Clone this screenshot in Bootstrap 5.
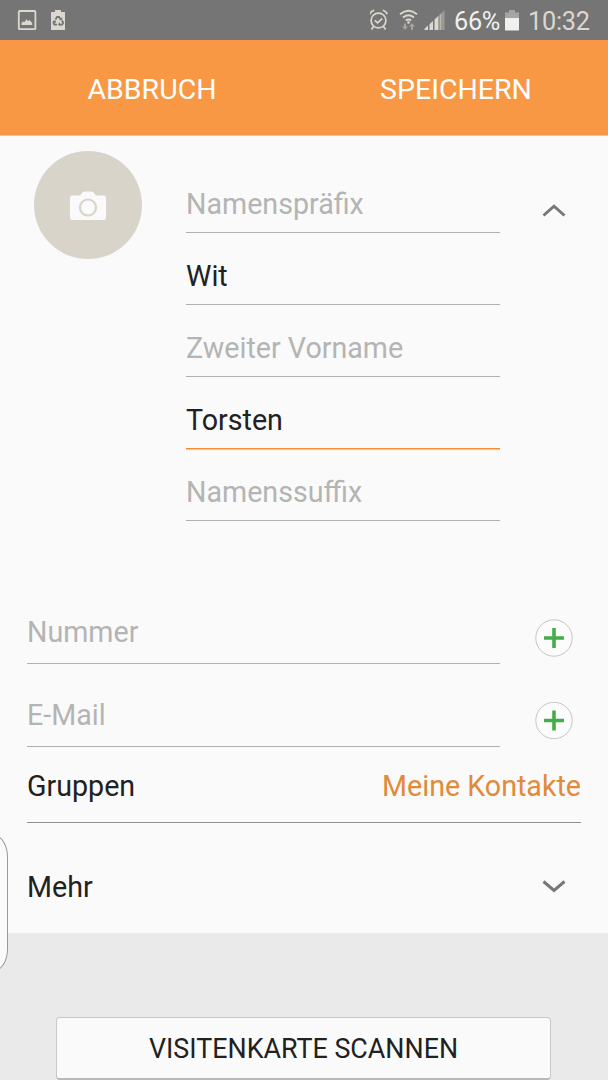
<!DOCTYPE html>
<html lang="de">
<head>
<meta charset="utf-8">
<meta name="viewport" content="width=device-width, initial-scale=1">
<title>Kontakt bearbeiten</title>
<link href="https://cdn.jsdelivr.net/npm/bootstrap@5.3.0/dist/css/bootstrap.min.css" rel="stylesheet">
<style>
body{font-family:Roboto,"Liberation Sans",sans-serif;font-size:28.65px;line-height:40px;color:#212121;background:#eaeaea;height:1080px;overflow:hidden}
.status{height:40px;background:#757575;color:#ddd8cf;font-size:25.3px;letter-spacing:-.3px}
.status span{padding-top:3px}
.percent{color:#f0f0f0}
.status svg,.sheet svg{display:block;flex:none}
.actions{height:96px;background:#f89844;color:#fff;border-bottom:1px solid #d5cdc5}
.actions button{color:inherit;font-size:28.5px;line-height:40px;padding:5px 0 0;border:0;border-radius:0}
.sheet{height:797px;background:#fafafa}
.avatar{width:108px;height:108px;background:#d9d4c9;margin:15px 0 0 34px;padding-top:1px}
.names{width:314px;margin:25px 0 0 44px}
.field{height:72px;padding:23px 0 8px;border-bottom:1px solid #b0b0b0}
.empty{color:#b4b4b4}
.focused{border-color:#f88c28;box-shadow:0 1px #fbc592}
.entry{height:83px;margin-left:27px}
.entry .line{width:473px;height:83px;border-bottom:1px solid #b0b0b0;padding-top:31px}
.add{width:38px;height:38px;margin:38px 0 0 35px}
.groups{height:76px;margin:0 27px;border-bottom:1px solid #909090;padding-top:19px}
.groups span:last-child{color:#e28a3a}
.more{height:110px;padding:44px 42px 0 27px}
.edge{left:-20px;top:835px;width:28px;height:136px;background:#fafafa;border:1px solid #999;border-radius:14px/22px}
.scan{width:495px;height:63px;margin:84px 0 0 56px;background:#fafafa;border:1px solid #c8c8c8;border-bottom:2px solid #b9b9b9;border-radius:4px;font-size:26.85px;line-height:60px;padding:1px 0 0;color:#212121}
</style>
</head>
<body class="position-relative">
<header>
  <div class="status d-flex align-items-center">
    <svg width="370" height="40" viewBox="0 0 370 40">
      <rect x="18.800" y="11" width="16.600" height="18.200" rx="1" fill="none" stroke="#ddd8cf" stroke-width="1.800"/>
      <path d="M21.500 25v-2l1.500-1.500 1.500.5 2-2.800 1.600 2 1.500-1.200 2.600 3V25z" fill="#ddd8cf"/>
      <path d="M51 12h4v-2h6v2h4v18H51z" fill="#ddd8cf"/>
      <g fill="none" stroke="#757575" stroke-width="1.800"><path d="M55.400 19.400l1.700-2.400h2l1.700 2.400M62 20.500l1.200 2.300-1 1.800h-2.800M57 24.600h-2.600l-1-1.800 1-2.200"/></g>
      <path d="M59.200 20.300h3v-3zM60 22.300v4l-2.200-2zM52.700 21.200l3-.8.5 2.800z" fill="#757575"/>
    </svg>
    <svg width="84" height="40" viewBox="370 0 84 40">
      <g fill="none" stroke="#ddd8cf" stroke-width="1.700"><circle cx="378.500" cy="20.500" r="7.400"/><path d="M374.800 20.300l2.800 2.600 4.600-4.200M369.800 14.300q1-3 4.400-4M387.200 14.300q-1-3-4.400-4M373.700 26.300l-2.300 3.200M383.300 26.300l2.300 3.200"/></g>
      <g fill="none" stroke="#ddd8cf" stroke-width="1.900"><path d="M400 14.200q8.500-6.800 17 0M403 17.500q5.500-4.500 11 0M405.800 20.500q2.700-2.200 5.400 0"/></g>
      <circle cx="408.500" cy="22.500" r="1.300" fill="#ddd8cf"/>
      <path d="M404 23.500h2v3h2l-3 3.500-3-3.500h2zM411 30h2v-3.500h2l-3-3.500-3 3.500h2z" fill="#a8a5a0"/>
      <path d="M424.500 30v-1.300l3.500-3.200V30zM429.500 30v-5.800l3.500-3.300V30zM434.500 30V19.500l4-3.700V30z" fill="#ddd8cf"/>
      <path d="M439.500 30V14.800l1.500-1.300V30z" fill="#bdb9b2"/><path d="M441 13.500l3.600-3.500v20H441z" fill="#9b9994"/>
    </svg>
    <span class="percent">66%</span>
    <svg width="28" height="40" viewBox="500 0 28 40"><path d="M505 12.500h4V10h6v2.500h4V18h-14z" fill="#a5a5a5"/><path d="M505 18h14v12.500h-14z" fill="#f0f0f0"/></svg>
    <span>10:32</span>
  </div>
  <nav class="actions d-flex">
    <button class="btn w-50 text-center">ABBRUCH</button>
    <button class="btn w-50 text-center">SPEICHERN</button>
  </nav>
</header>
<main class="sheet">
  <section class="d-flex">
    <div class="avatar rounded-circle d-flex align-items-center justify-content-center">
      <svg width="36" height="30" viewBox="0 0 36 30"><path d="M2.500 4.500H10L13 1q.5-.5 1.300-.5h7.400q.8 0 1.300.5l3 3.500h7.500Q36 4.500 36 7v19.500q0 2.500-2.500 2.500h-31Q0 29 0 26.500V7q0-2.500 2.500-2.500z" fill="#fafafa"/><circle cx="18" cy="16.500" r="8" fill="none" stroke="#d9d4c9" stroke-width="2.200"/></svg>
    </div>
    <div class="names">
      <div class="field empty">Namenspräfix</div>
      <div class="field">Wit</div>
      <div class="field empty">Zweiter Vorname</div>
      <div class="field focused">Torsten</div>
      <div class="field empty">Namenssuffix</div>
    </div>
    <svg class="ms-auto" width="66" height="90" viewBox="542 136 66 90"><path d="M543.500 215.500l10.500-9.300 10.500 9.300" fill="none" stroke="#777" stroke-width="3"/></svg>
  </section>
  <section class="pt-5 mt-2">
    <div class="entry d-flex empty mt-1">
      <div class="line">Nummer</div>
      <svg class="add" viewBox="0 0 38 38"><circle cx="19" cy="19" r="18.200" fill="#fcfcfc" stroke="#c9c6c0"/><path d="M9 19h20M19 9v20" stroke="#43ae49" stroke-width="3.600"/></svg>
    </div>
    <div class="entry d-flex empty">
      <div class="line">E-Mail</div>
      <svg class="add" viewBox="0 0 38 38"><circle cx="19" cy="18.500" r="18.200" fill="#fcfcfc" stroke="#c9c6c0"/><path d="M9 18.500h20M19 8.500v20" stroke="#43ae49" stroke-width="3.600"/></svg>
    </div>
  </section>
  <section class="groups d-flex justify-content-between"><span>Gruppen</span><span>Meine Kontakte</span></section>
  <section class="more d-flex justify-content-between">
    <span>Mehr</span>
    <svg width="24" height="36" viewBox="542 867 24 36"><path d="M543.500 881.500l10.500 9 10.500-9" fill="none" stroke="#777" stroke-width="3"/></svg>
  </section>
</main>
<button class="btn scan d-block">VISITENKARTE SCANNEN</button>
<div class="edge position-absolute"></div>
</body>
</html>
